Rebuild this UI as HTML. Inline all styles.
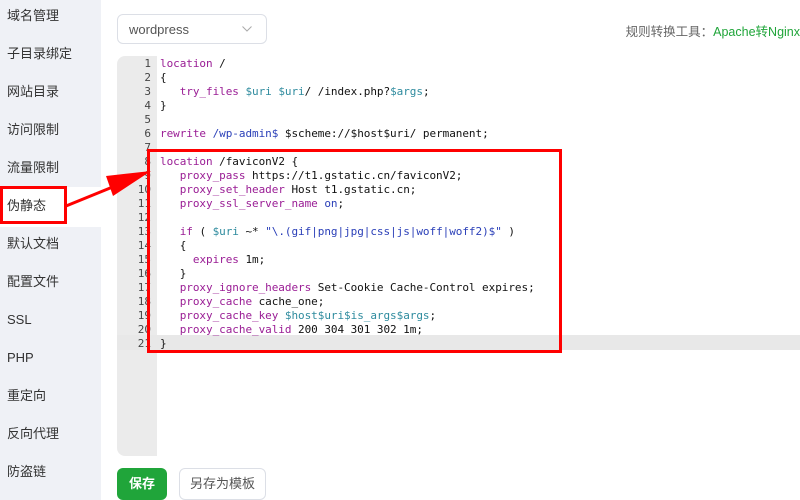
<!DOCTYPE html>
<html><head><meta charset="utf-8"><style>
*{margin:0;padding:0;box-sizing:border-box}
body{width:800px;height:500px;overflow:hidden;background:#fff;font-family:"Liberation Sans","Noto Sans CJK SC",sans-serif;position:relative}
.side{position:absolute;left:0;top:0;width:101px;height:500px;background:#eff1f6}
.side div{position:absolute;left:7px;font-size:13px;color:#333;line-height:20px}
.act{position:absolute;left:0;top:187px;width:101px;height:40px;background:#fff}
.sel{position:absolute;left:117px;top:14px;width:150px;height:30px;border:1px solid #dcdfe6;border-radius:6px;font-size:13px;color:#555;padding:7px 0 0 11px}
.sel svg{position:absolute;right:14px;top:11px}
.tool{position:absolute;right:0;top:21px;font-size:12.5px;color:#666;white-space:nowrap}
.tool span{color:#20a53a}
.ed{position:absolute;left:117px;top:56px;width:683px;height:400px;background:#fff;border-radius:8px 0 0 8px;overflow:hidden}
.gut{position:absolute;left:0;top:0;width:40px;height:400px;background:#ebebeb}
.hl{position:absolute;left:0;top:279px;width:683px;height:15px;background:#e8e8e8}
.code{position:absolute;left:0;top:0;font-family:"DejaVu Sans Mono",monospace;font-size:11px;line-height:14px;white-space:pre;color:#111;letter-spacing:-0.05px}
.ln{position:absolute;left:0;top:0;width:34px;text-align:right;font-family:"DejaVu Sans Mono",monospace;font-size:11px;line-height:14px;color:#444;white-space:pre}
.k{color:#9a1d95}.v{color:#2e8b9e}.b{color:#2a3fb8}
.btn1{position:absolute;left:117px;top:468px;width:50px;height:32px;background:#20a53a;border-radius:6px;color:#fff;font-size:13px;font-weight:bold;text-align:center;line-height:32px}
.btn2{position:absolute;left:179px;top:468px;width:87px;height:32px;border:1px solid #dcdfe6;border-radius:6px;color:#555;font-size:13px;text-align:center;line-height:30px}
</style></head><body>
<div class="side">
<div style="top:6px">域名管理</div>
<div style="top:44px">子目录绑定</div>
<div style="top:82px">网站目录</div>
<div style="top:120px">访问限制</div>
<div style="top:158px">流量限制</div>
</div>
<div class="act"></div>
<div class="side" style="background:none">
<div style="top:196px">伪静态</div>
<div style="top:234px">默认文档</div>
<div style="top:272px">配置文件</div>
<div style="top:310px">SSL</div>
<div style="top:348px">PHP</div>
<div style="top:386px">重定向</div>
<div style="top:424px">反向代理</div>
<div style="top:462px">防盗链</div>
</div>
<div class="sel">wordpress<svg width="10" height="6"><path d="M0.5 0.5L5 5L9.5 0.5" fill="none" stroke="#aaa"/></svg></div>
<div class="tool">规则转换工具：<span>Apache转Nginx</span></div>
<div class="ed">
<div class="gut"></div>
<div class="hl"></div>
<div class="ln" style="top:1px">1
2
3
4
5
6
7
8
9
10
11
12
13
14
15
16
17
18
19
20
21</div>
<div class="code" style="left:43px;top:1px"><span class="k">location</span> /
{
   <span class="k">try_files</span> <span class="v">$uri</span> <span class="v">$uri</span>/ /index.php?<span class="v">$args</span>;
}

<span class="k">rewrite</span> <span class="b">/wp-admin$</span> $scheme://$host$uri/ permanent;

<span class="k">location</span> /faviconV2 {
   <span class="k">proxy_pass</span> https://t1.gstatic.cn/faviconV2;
   <span class="k">proxy_set_header</span> Host t1.gstatic.cn;
   <span class="k">proxy_ssl_server_name</span> <span class="b">on</span>;

   <span class="k">if</span> ( <span class="v">$uri</span> ~* <span class="b">"\.(gif|png|jpg|css|js|woff|woff2)$"</span> )
   {
     <span class="k">expires</span> 1m;
   }
   <span class="k">proxy_ignore_headers</span> Set-Cookie Cache-Control expires;
   <span class="k">proxy_cache</span> cache_one;
   <span class="k">proxy_cache_key</span> <span class="v">$host$uri$is_args$args</span>;
   <span class="k">proxy_cache_valid</span> 200 304 301 302 1m;
}</div>
</div>
<div class="btn1">保存</div>
<div class="btn2">另存为模板</div>
<svg style="position:absolute;left:0;top:0" width="800" height="500">
<rect x="148.5" y="150.5" width="412" height="201" fill="none" stroke="#f00" stroke-width="3"/>
<rect x="1.5" y="187.5" width="64" height="35" fill="none" stroke="#f00" stroke-width="3"/>
<line x1="66" y1="206" x2="120" y2="184" stroke="#f00" stroke-width="3"/>
<polygon points="151,171 106,176 113,196" fill="#f00"/>
</svg>
</body></html>
